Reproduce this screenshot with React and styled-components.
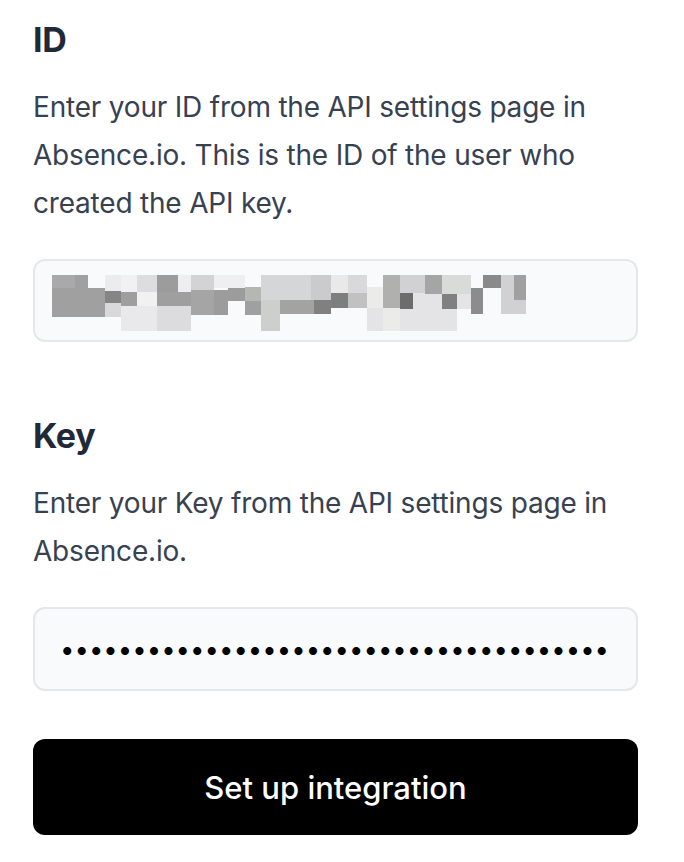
import React from "react";
import styled, { createGlobalStyle } from "styled-components";

const Global = createGlobalStyle`
  html, body { margin: 0; padding: 0; background: #ffffff; }
  body { font-family: Inter, "Noto Sans", sans-serif; -webkit-font-smoothing: antialiased; }
  * { box-sizing: border-box; }
`;

const Form = styled.form`
  display: flex;
  flex-direction: column;
  width: 605px;
  margin-left: 33px;
  padding-top: 20px;
`;

const Section = styled.div`
  display: flex;
  flex-direction: column;
  margin-bottom: ${(p) => p.$gap}px;
`;

const Heading = styled.label`
  font-size: 34px;
  line-height: 40px;
  font-weight: 700;
  color: #1f2937;
  margin: 0 0 23px;
  letter-spacing: -0.3px;
`;

const Help = styled.p`
  font-size: 28px;
  line-height: 48px;
  font-weight: 400;
  color: #374151;
  margin: 0 0 32px;
  letter-spacing: -0.2px;
`;

const FieldBox = styled.div`
  display: flex;
  align-items: flex-start;
  height: 83px;
  padding: 14px 0 0 17px;
  background: #f9fafb;
  border: 2px solid #e5e7eb;
  border-radius: 12px;
`;

const PasswordInput = styled.input`
  height: 84px;
  width: 100%;
  padding: 0 0 1px 25px;
  background: #f9fafb;
  border: 2px solid #e5e7eb;
  border-radius: 12px;
  font-family: Inter, "Noto Sans", sans-serif;
  font-size: 25.7px;
  color: #000;
  outline: none;
`;

const Button = styled.button`
  height: 96px;
  width: 100%;
  border: none;
  border-radius: 12px;
  background: #000;
  color: #fff;
  font-family: Inter, "Noto Sans", sans-serif;
  font-size: 31px;
  font-weight: 500;
  cursor: pointer;
`;

const cells = [
  [61, 119, 78, 117, "#a9a9ab"],
  [119, 152, 78, 125, "#a0a0a0"],
  [61, 195, 117, 200, "#a0a0a0"],
  [195, 235, 78, 125, "#ececee"],
  [195, 235, 125, 160, "#858585"],
  [195, 235, 160, 200, "#d9d9db"],
  [235, 276, 78, 128, "#f1f1f3"],
  [276, 326, 78, 128, "#dddddf"],
  [235, 276, 128, 170, "#9e9e9e"],
  [276, 326, 128, 170, "#f1f1f1"],
  [235, 326, 170, 242, "#e9e9eb"],
  [326, 379, 78, 128, "#9c9c9c"],
  [326, 412, 128, 170, "#9f9f9f"],
  [326, 412, 170, 242, "#dcdcde"],
  [379, 412, 78, 128, "#eeeef0"],
  [412, 469, 78, 122, "#d3d3d5"],
  [469, 546, 78, 117, "#efeff1"],
  [412, 469, 122, 195, "#a5a5a5"],
  [469, 503, 122, 195, "#9c9c9c"],
  [503, 546, 117, 153, "#9c9c9c"],
  [546, 587, 113, 153, "#b5b7b5"],
  [546, 587, 153, 195, "#a0a0a0"],
  [587, 713, 78, 150, "#d5d6d8"],
  [587, 635, 150, 242, "#cdcfcd"],
  [635, 720, 150, 192, "#a3a4a2"],
  [713, 764, 78, 150, "#cbcbcd"],
  [720, 764, 150, 192, "#7f807f"],
  [764, 807, 78, 132, "#e9e9e9"],
  [764, 807, 132, 175, "#7d7f7e"],
  [807, 855, 78, 132, "#d9d9db"],
  [807, 855, 132, 175, "#c1c1c1"],
  [855, 895, 113, 175, "#ebecea"],
  [855, 895, 175, 242, "#e4e4e6"],
  [895, 938, 78, 175, "#b0b1af"],
  [895, 938, 175, 242, "#ebecea"],
  [938, 1001, 78, 132, "#d1d1d3"],
  [938, 1081, 177, 242, "#e4e4e6"],
  [938, 970, 132, 177, "#6c6c6c"],
  [970, 1043, 132, 177, "#e4e4e6"],
  [1001, 1043, 78, 135, "#a5a5a5"],
  [1043, 1115, 78, 135, "#d8dbd8"],
  [1043, 1081, 135, 177, "#808080"],
  [1081, 1115, 135, 177, "#e4e4e6"],
  [1115, 1146, 117, 192, "#8c8c8c"],
  [1146, 1191, 78, 117, "#8a8a8a"],
  [1191, 1224, 78, 150, "#d1d1d3"],
  [1224, 1254, 78, 150, "#a0a0a0"],
  [1191, 1254, 150, 192, "#d1d1d3"],
];

function Redacted() {
  return (
    <svg width="474" height="56" viewBox="61 78 1193 164" preserveAspectRatio="none" shapeRendering="crispEdges">
      {cells.map(([x1, x2, y1, y2, c], i) => (
        <rect key={i} x={x1} y={y1} width={x2 - x1} height={y2 - y1} fill={c} />
      ))}
    </svg>
  );
}

export default function App() {
  return (
    <>
      <Global />
      <Form onSubmit={(e) => e.preventDefault()}>
        <Section $gap={74}>
          <Heading>ID</Heading>
          <Help>
            Enter your ID from the API settings page in Absence.io. This is the ID of the user who
            created the API key.
          </Help>
          <FieldBox>
            <Redacted />
          </FieldBox>
        </Section>
        <Section $gap={48}>
          <Heading>Key</Heading>
          <Help>Enter your Key from the API settings page in Absence.io.</Help>
          <PasswordInput type="password" readOnly value={"x".repeat(38)} />
        </Section>
        <Button type="submit">Set up integration</Button>
      </Form>
    </>
  );
}
